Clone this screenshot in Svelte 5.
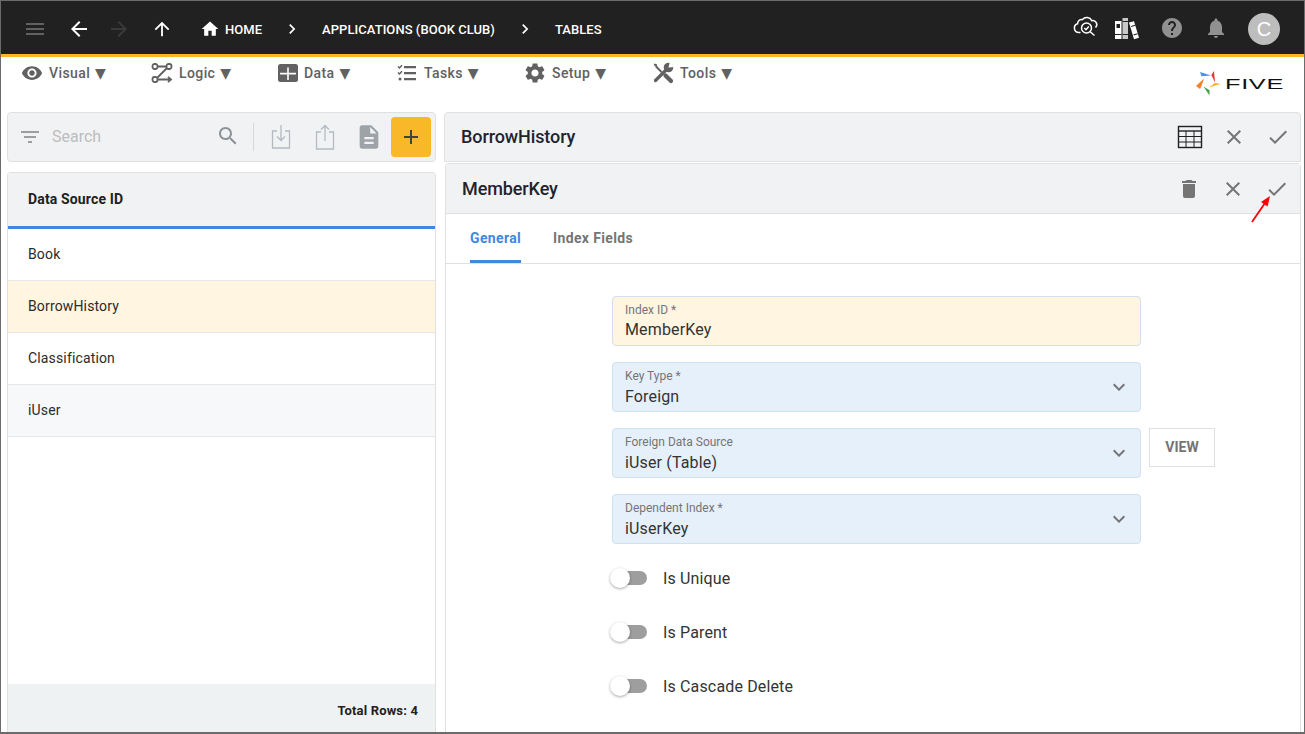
<script>
  const icons = {
    menu: 'M3 18h18v-2H3v2zm0-5h18v-2H3v2zm0-7v2h18V6H3z',
    back: 'M20 11H7.83l5.59-5.59L12 4l-8 8 8 8 1.41-1.41L7.83 13H20v-2z',
    forward: 'M12 4l-1.41 1.41L16.17 11H4v2h12.17l-5.58 5.59L12 20l8-8z',
    up: 'M4 12l1.41 1.41L11 7.83V20h2V7.83l5.58 5.59L20 12l-8-8-8 8z',
    home: 'M10 20v-6h4v6h5v-8h3L12 3 2 12h3v8z',
    chevron: 'M10 6L8.59 7.41 13.17 12l-4.58 4.59L10 18l6-6z',
    eye: 'M12 4.5C7 4.5 2.73 7.61 1 12c1.73 4.39 6 7.5 11 7.5s9.27-3.11 11-7.5c-1.73-4.39-6-7.5-11-7.5zM12 17c-2.76 0-5-2.24-5-5s2.24-5 5-5 5 2.24 5 5-2.24 5-5 5zm0-8c-1.66 0-3 1.34-3 3s1.34 3 3 3 3-1.34 3-3-1.34-3-3-3z',
    gear: 'M19.14 12.94c.04-.3.06-.61.06-.94 0-.32-.02-.64-.07-.94l2.03-1.58c.18-.14.23-.41.12-.61l-1.92-3.32c-.12-.22-.37-.29-.59-.22l-2.39.96c-.5-.38-1.03-.7-1.62-.94l-.36-2.54c-.04-.24-.24-.41-.48-.41h-3.84c-.24 0-.43.17-.47.41l-.36 2.54c-.59.24-1.13.57-1.62.94l-2.39-.96c-.22-.08-.47 0-.59.22L2.74 8.87c-.12.21-.08.47.12.61l2.03 1.58c-.05.3-.09.63-.09.94s.02.64.07.94l-2.03 1.58c-.18.14-.23.41-.12.61l1.92 3.32c.12.22.37.29.59.22l2.39-.96c.5.38 1.03.7 1.62.94l.36 2.54c.05.24.24.41.48.41h3.84c.24 0 .44-.17.47-.41l.36-2.54c.59-.24 1.13-.56 1.62-.94l2.39.96c.22.08.47 0 .59-.22l1.92-3.32c.12-.22.07-.47-.12-.61l-2.01-1.58zM12 15.6c-1.98 0-3.6-1.62-3.6-3.6s1.62-3.6 3.6-3.6 3.6 1.62 3.6 3.6-1.62 3.6-3.6 3.6z',
    help: 'M12 2C6.48 2 2 6.48 2 12s4.48 10 10 10 10-4.48 10-10S17.52 2 12 2zm1 17h-2v-2h2v2zm2.07-7.75l-.9.92C13.45 12.9 13 13.5 13 15h-2v-.5c0-1.1.45-2.1 1.17-2.83l1.24-1.26c.37-.36.59-.86.59-1.41 0-1.1-.9-2-2-2s-2 .9-2 2H8c0-2.21 1.79-4 4-4s4 1.79 4 4c0 .88-.36 1.68-.93 2.25z',
    bell: 'M12 22c1.1 0 2-.9 2-2h-4c0 1.1.89 2 2 2zm6-6v-5c0-3.07-1.64-5.64-4.5-6.32V4c0-.83-.67-1.5-1.5-1.5s-1.5.67-1.5 1.5v.68C7.63 5.36 6 7.92 6 11v5l-2 2v1h16v-1l-2-2z',
    search: 'M15.5 14h-.79l-.28-.27C15.41 12.59 16 11.11 16 9.5 16 5.91 13.09 3 9.5 3S3 5.91 3 9.5 5.91 16 9.5 16c1.61 0 3.09-.59 4.23-1.57l.27.28v.79l5 4.99L20.49 19l-4.99-5zm-6 0C7.01 14 5 11.99 5 9.5S7.01 5 9.5 5 14 7.01 14 9.5 11.99 14 9.5 14z',
    filter: 'M10 18h4v-2h-4v2zM3 6v2h18V6H3zm3 7h12v-2H6v2z',
    doc: 'M14 2H6c-1.1 0-2 .9-2 2v16c0 1.1.89 2 2 2h12c1.1 0 2-.9 2-2V8l-6-6zm2 16H8v-2h8v2zm0-4H8v-2h8v2zm-3-5V3.5L18.5 9H13z',
    close: 'M19 6.41L17.59 5 12 10.59 6.41 5 5 6.41 10.59 12 5 17.59 6.41 19 12 13.41 17.59 19 19 17.59 13.41 12z',
    check: 'M9 16.17L4.83 12l-1.42 1.41L9 19 21 7l-1.41-1.41z',
    trash: 'M6 19c0 1.1.9 2 2 2h8c1.1 0 2-.9 2-2V7H6v12zM19 4h-3.5l-1-1h-5l-1 1H5v2h14V4z',
    expand: 'M16.59 8.59L12 13.17 7.41 8.59 6 10l6 6 6-6z',
    add: 'M19 13h-6v6h-2v-6H5v-2h6V5h2v6h6v2z'
  };

  const rows = ['Book', 'BorrowHistory', 'Classification', 'iUser'];
  const selects = [
    { label: 'Key Type *', value: 'Foreign' },
    { label: 'Foreign Data Source', value: 'iUser (Table)', view: true },
    { label: 'Dependent Index *', value: 'iUserKey' }
  ];
  const toggles = ['Is Unique', 'Is Parent', 'Is Cascade Delete'];
</script>

{#snippet icon(name, size = 24, cls = '')}
  <svg class="icon {cls}" width={size} height={size} viewBox="0 0 24 24" aria-hidden="true"><path d={icons[name]} /></svg>
{/snippet}

<div class="frame">
  <header class="topbar">
    <button class="nav menu">{@render icon('menu')}</button>
    <button class="nav back">{@render icon('back')}</button>
    <button class="nav forward">{@render icon('forward')}</button>
    <button class="nav up">{@render icon('up', 22)}</button>
    <div class="crumbs">
      <span class="crumb home">{@render icon('home', 20)}HOME</span>
      <span class="sep">{@render icon('chevron', 20)}</span>
      <span class="crumb">APPLICATIONS (BOOK CLUB)</span>
      <span class="sep">{@render icon('chevron', 20)}</span>
      <span class="crumb">TABLES</span>
    </div>
    <div class="top-right">
      <svg class="cloud" width="26" height="26" viewBox="0 0 26 26" fill="none" stroke="#fff" stroke-width="1.5" aria-hidden="true">
        <path d="M7.500 19.500H5.800A4.500 4.500 0 0 1 4.600 10.700 4 4 0 0 1 9.400 6.600 5.600 5.600 0 0 1 18.800 7.700a4 4 0 0 1 3.700 6.800" />
        <circle cx="13.500" cy="15" r="5" />
        <path d="M11.300 15l1.700 1.700 2.800-3.200M17.200 18.800l4.300 3.700" />
      </svg>
      <svg class="books" width="26" height="26" viewBox="0 0 26 26" aria-hidden="true">
        <path fill="#fff" d="M1 5h6.500v18H1z" />
        <path fill="#c8c8c8" d="M8.500 2h5.500v21H8.500z" />
        <path fill="#fff" d="M15 6.500l5-1.300 5 16.600-5 1.500z" />
        <path fill="#212121" d="M2.500 8h3.500v4H2.500zM1 18h6.500v1H1zM8.500 18h5.500v1H8.500zM8.500 5h5.500v1H8.500zM17 10l4-1.200.3 1-4 1.200zM19.400 18.500l4-1.200.3 1-4 1.200z" />
      </svg>
      {@render icon('help', 24, 'muted')}
      {@render icon('bell', 24, 'muted')}
      <span class="avatar">C</span>
    </div>
  </header>

  <nav class="menubar">
    <span class="m-item visual">{@render icon('eye', 22)}<span>Visual <span class="tri">▼</span></span></span>
    <span class="m-item logic">
      <svg width="22" height="22" viewBox="0 0 22 22" fill="none" stroke="#616161" stroke-width="1.8" aria-hidden="true">
        <rect x="1.500" y="2" width="5" height="5" rx="2" />
        <rect x="15.500" y="2" width="5" height="5" rx="2" />
        <rect x="1.500" y="15" width="5" height="5" rx="2" />
        <path d="M6.500 4.500h9M15.500 6.500L6.500 15.500M6.500 17.500h13M17 14.800l3 2.700-3 2.700" />
      </svg>
      <span>Logic <span class="tri">▼</span></span>
    </span>
    <span class="m-item data">
      <svg width="22" height="22" viewBox="0 0 22 22" aria-hidden="true">
        <rect x="1" y="2" width="20" height="18" rx="2.500" fill="#616161" />
        <path fill="#fff" d="M3 10.800h16v1.600H3zM10.200 5.500h1.600V18h-1.600z" />
      </svg>
      <span>Data <span class="tri">▼</span></span>
    </span>
    <span class="m-item tasks">
      <svg width="20" height="20" viewBox="0 0 20 20" aria-hidden="true">
        <path fill="#616161" d="M7 3h12v2.200H7zM7 9h12v2.200H7zM7 15h12v2.200H7z" />
        <path fill="none" stroke="#616161" stroke-width="1.500" d="M1 3.500l1.500 1.500L5 2.200M1 9.500l1.500 1.500L5 8.200" />
        <circle cx="3" cy="16" r="1.500" fill="#616161" />
      </svg>
      <span>Tasks <span class="tri">▼</span></span>
    </span>
    <span class="m-item setup">{@render icon('gear', 24)}<span>Setup <span class="tri">▼</span></span></span>
    <span class="m-item tools">
      <svg width="24" height="24" viewBox="0 0 24 24" fill="none" stroke="#616161" aria-hidden="true">
        <path stroke-width="2" d="M3 3.500l2 .5.500 2 5 5" />
        <path stroke-width="4.200" stroke-linecap="round" d="M14.500 14.500l5.500 5.500" />
        <path stroke-width="3.200" stroke-linecap="round" d="M4.500 19.500L16 8" />
        <circle cx="17.500" cy="6.500" r="4.800" fill="#616161" stroke="none" />
        <path fill="#fff" stroke="none" d="M17.500 6.500L19 .5l5 5.500z" />
      </svg>
      <span>Tools <span class="tri">▼</span></span>
    </span>
    <div class="logo">
      <svg width="26" height="26" viewBox="0 0 26 26" aria-hidden="true">
        <path fill="#4a90e2" d="M4 1l11 3.500-9.500.8z" />
        <path fill="#e5383b" d="M18 0l1 11.500-3.700-7.500z" />
        <path fill="#f9b72a" d="M24.500 13L13 16.500l6-4.800z" />
        <path fill="#43a047" d="M13.500 24.500L7.500 15.500l6 3.700z" />
        <path fill="#f5822a" d="M0 15l8-7.500-2.500 7.500-1.500 3z" />
      </svg>
      <svg class="wordmark" width="59" height="20" viewBox="0 0 59 20" aria-label="FIVE"><text x="0" y="15" textLength="59" lengthAdjust="spacingAndGlyphs">FIVE</text></svg>
    </div>
  </nav>

  <main class="content">
    <aside class="left">
      <div class="toolbar">
        {@render icon('filter', 24, 'filter')}
        <span class="search-text">Search</span>
        {@render icon('search', 24, 'search')}
        <span class="divider"></span>
        <svg class="tool-a" width="22" height="26" viewBox="0 0 22 26" fill="none" stroke="#b4bac0" stroke-width="1.300" aria-hidden="true">
          <path d="M7 7H2.500v17h17V7H15M11 1v15M7 12.500l4 4 4-4" />
        </svg>
        <svg class="tool-b" width="22" height="26" viewBox="0 0 22 26" fill="none" stroke="#b4bac0" stroke-width="1.300" aria-hidden="true">
          <path d="M7 8H2.500v17h17V8H15M11 17V2M7 5.500l4-4 4 4" />
        </svg>
        {@render icon('doc', 28, 'tool-doc')}
        <button class="add">{@render icon('add', 24)}</button>
      </div>

      <section class="list">
        <div class="list-head">Data Source ID</div>
        <div class="list-rows">
          {#each rows as row, i}
            <div class="row" class:selected={i === 1} class:alt={i === 3}>{row}</div>
          {/each}
        </div>
        <div class="list-foot">Total Rows: 4</div>
      </section>
    </aside>

    <div class="right">
      <div class="title-bar outer">
        <span class="title">BorrowHistory</span>
        <svg class="grid-icon" width="26" height="24" viewBox="0 0 26 24" fill="none" stroke="#212121" aria-hidden="true">
          <rect x="1.500" y="1.500" width="23" height="21" stroke-width="1.400" />
          <path d="M1.500 6h23" stroke-width="1.400" />
          <path d="M1.500 11.500h23M1.500 17h23M9 6v16.500M17 6v16.500" stroke-width="1" />
        </svg>
        {@render icon('close', 24, 'action')}
        {@render icon('check', 24, 'action')}
      </div>

      <section class="card">
        <div class="title-bar inner">
          <span class="title">MemberKey</span>
          {@render icon('trash', 24, 'action')}
          {@render icon('close', 24, 'action')}
          <span class="check-wrap">
            {@render icon('check', 24, 'action')}
            <svg class="arrow" width="22" height="32" viewBox="0 0 22 32" aria-hidden="true">
              <path fill="none" stroke="#f00" stroke-width="1.800" d="M2 31L15 12" />
              <path fill="#f00" d="M20 5l-2.400 10.500-6.600-4.600z" />
            </svg>
          </span>
        </div>

        <div class="tabs">
          <span class="tab active">General</span>
          <span class="tab">Index Fields</span>
        </div>

        <div class="form">
          <div class="field key">
            <span class="f-label">Index ID *</span>
            <span class="f-value">MemberKey</span>
          </div>
          {#each selects as s}
            <div class="select-row">
              <div class="field sel">
                <span class="f-label">{s.label}</span>
                <span class="f-value">{s.value}</span>
                {@render icon('expand', 24, 'caret')}
              </div>
              {#if s.view}
                <button class="view">VIEW</button>
              {/if}
            </div>
          {/each}
          <div class="toggles">
            {#each toggles as t}
              <div class="toggle">
                <span class="track"><span class="thumb"></span></span>
                <span class="t-label">{t}</span>
              </div>
            {/each}
          </div>
        </div>
      </section>
    </div>
  </main>
</div>

<style>
  :global(body) {
    margin: 0;
    background: #fff;
  }

  .frame {
    box-sizing: border-box;
    width: 1305px;
    height: 734px;
    overflow: hidden;
    display: flex;
    flex-direction: column;
    border-top: 1px solid #6b6b6b;
    border-left: 1px solid #6b6b6b;
    border-right: 1px solid #6b6b6b;
    border-bottom: 2px solid #6b6b6b;
    font-family: Roboto, 'Liberation Sans', sans-serif;
    color: #212121;
  }

  svg {
    display: block;
    flex: none;
  }

  .icon path {
    fill: currentColor;
  }

  button {
    border: none;
    background: none;
    padding: 0;
    font-family: inherit;
  }

  /* top bar */
  .topbar {
    flex: none;
    box-sizing: border-box;
    height: 56px;
    background: #212121;
    border-bottom: 3px solid #f9b72a;
    display: flex;
    align-items: center;
    color: #fff;
    padding: 3px 0 0 22px;
  }

  .nav {
    display: flex;
    color: #fff;
  }

  .menu {
    color: #616161;
    margin-right: 20px;
  }

  .forward {
    color: #3a3a3a;
    margin-left: 16px;
  }

  .up {
    margin-left: 20px;
  }

  .crumbs {
    display: flex;
    align-items: center;
    margin-left: 27px;
    font-size: 13px;
    font-weight: 500;
    letter-spacing: 0.05px;
  }

  .crumb {
    display: flex;
    align-items: center;
    gap: 5px;
  }

  .sep {
    margin: 0 20px;
  }

  .top-right {
    margin-left: auto;
    display: flex;
    align-items: center;
    padding-right: 24px;
  }

  .cloud {
    margin: 0 15px 6px 0;
  }

  .books {
    margin-right: 20px;
  }

  .muted {
    color: #919191;
    margin: 0 20px 3px 0;
  }

  .avatar {
    width: 32px;
    height: 32px;
    border-radius: 50%;
    background: #bdbdbd;
    color: #fff;
    font-size: 20px;
    display: flex;
    align-items: center;
    justify-content: center;
    font-family: 'Liberation Sans', sans-serif;
  }

  /* menu row */
  .menubar {
    flex: none;
    height: 55px;
    position: relative;
    display: flex;
    align-items: flex-start;
    padding: 4px 0 0 20px;
    box-sizing: border-box;
    color: #616161;
    font-size: 14px;
    font-weight: 500;
    letter-spacing: 0.4px;
  }

  .m-item {
    display: flex;
    align-items: center;
    gap: 6px;
    height: 24px;
    white-space: nowrap;
  }

  .tri {
    font-family: 'DejaVu Sans', sans-serif;
    font-size: 14px;
    margin-left: 1px;
  }

  .visual { width: 130px; }
  .logic { width: 126px; }
  .data { width: 120px; gap: 5px; }
  .tasks { width: 126px; gap: 7px; }
  .setup { width: 128px; gap: 5px; }
  .tools { gap: 5px; }

  .logo {
    position: absolute;
    top: 14px;
    right: 20px;
    display: flex;
    align-items: center;
    gap: 3px;
  }

  .wordmark text {
    font-family: 'Liberation Sans', sans-serif;
    font-size: 15px;
    fill: #111;
  }

  /* body */
  .content {
    flex: 1;
    min-height: 0;
    display: flex;
    gap: 8px;
    padding-left: 6px;
    padding-right: 3px;
  }

  .left {
    width: 429px;
    flex: none;
    display: flex;
    flex-direction: column;
    gap: 10px;
  }

  .toolbar {
    flex: none;
    box-sizing: border-box;
    height: 50px;
    background: #f1f2f4;
    border: 1px solid #e0e0e0;
    border-radius: 4px;
    display: flex;
    align-items: center;
    padding-left: 10px;
  }

  .filter {
    color: #9e9e9e;
  }

  .search-text {
    margin: 0 0 2px 10px;
    width: 164px;
    font-size: 16px;
    color: #bdbdbd;
  }

  .search {
    color: #8d9296;
    margin-bottom: 2px;
  }

  .divider {
    width: 1px;
    height: 28px;
    background: #d5d7d9;
    margin: 0 16px 0 13px;
  }

  .tool-b {
    margin-left: 22px;
  }

  .tool-doc {
    color: #9ea3a8;
    margin-left: 19px;
  }

  .add {
    width: 40px;
    height: 40px;
    margin-left: 8px;
    border-radius: 4px;
    background: #f9b72a;
    color: #424242;
    display: flex;
    align-items: center;
    justify-content: center;
  }

  .list {
    flex: 1;
    min-height: 0;
    box-sizing: border-box;
    display: flex;
    flex-direction: column;
    border: 1px solid #e0e0e0;
    border-bottom: none;
    border-radius: 4px 4px 0 0;
  }

  .list-head {
    flex: none;
    box-sizing: border-box;
    height: 56px;
    background: #f1f2f4;
    border-bottom: 3px solid #3f88de;
    display: flex;
    align-items: center;
    padding: 0 0 2px 20px;
    font-size: 14px;
    font-weight: 700;
    letter-spacing: 0.15px;
  }

  .list-rows {
    flex: 1;
  }

  .row {
    box-sizing: border-box;
    height: 52px;
    border-bottom: 1px solid #e6e6e6;
    display: flex;
    align-items: center;
    padding: 0 0 2px 20px;
    font-size: 14px;
    letter-spacing: 0.15px;
    color: #2b2b2b;
  }

  .row.selected {
    background: #fff5e1;
  }

  .row.alt {
    background: #f7f8fa;
  }

  .list-foot {
    flex: none;
    height: 48px;
    background: #eff2f3;
    display: flex;
    align-items: center;
    justify-content: flex-end;
    padding-right: 17px;
    padding-top: 4px;
    box-sizing: border-box;
    font-size: 13px;
    font-weight: 700;
    letter-spacing: 0.15px;
  }

  .right {
    flex: 1;
    min-width: 0;
    display: flex;
    flex-direction: column;
    gap: 1px;
  }

  .title-bar {
    flex: none;
    box-sizing: border-box;
    background: #f1f2f4;
    display: flex;
    align-items: center;
    gap: 20px;
  }

  .title-bar .title {
    margin-right: auto;
    font-size: 18px;
    font-weight: 500;
    letter-spacing: -0.1px;
    color: #1f2430;
  }

  .outer {
    height: 50px;
    border: 1px solid #e0e0e0;
    border-radius: 4px 4px 0 0;
    padding: 0 10px 0 16px;
  }

  .outer .title {
    margin-bottom: 2px;
  }

  .grid-icon {
    margin-right: -1px;
  }

  .action {
    color: #757575;
  }

  .card {
    flex: 1;
    min-height: 0;
    margin-left: 1px;
    border: 1px solid #e0e0e0;
    border-bottom: none;
    border-radius: 4px 4px 0 0;
    display: flex;
    flex-direction: column;
  }

  .inner {
    height: 50px;
    border-bottom: 1px solid #e0e0e0;
    padding: 0 11px 0 16px;
  }

  .check-wrap {
    position: relative;
  }

  .arrow {
    position: absolute;
    top: 14px;
    left: -15px;
  }

  .tabs {
    flex: none;
    box-sizing: border-box;
    height: 50px;
    border-bottom: 1px solid #e0e0e0;
    display: flex;
    gap: 32px;
    padding-left: 24px;
  }

  .tab {
    display: flex;
    align-items: center;
    box-sizing: border-box;
    height: 49px;
    padding-bottom: 1px;
    font-size: 14px;
    font-weight: 700;
    color: #757575;
    letter-spacing: 0.35px;
  }

  .tab.active {
    color: #3f88de;
    box-shadow: inset 0 -3px 0 #3f88de;
  }

  .form {
    flex: 1;
    padding: 32px 0 0 166px;
    display: flex;
    flex-direction: column;
    gap: 16px;
  }

  .select-row {
    display: flex;
    align-items: flex-start;
    gap: 8px;
  }

  .field {
    box-sizing: border-box;
    position: relative;
    width: 529px;
    height: 50px;
    border: 1px solid #cfe0ef;
    border-radius: 4px;
    padding: 6px 12px 0;
    display: flex;
    flex-direction: column;
  }

  .field.key {
    background: #fff5e1;
  }

  .field.sel {
    background: #e5f0fb;
  }

  .f-label {
    font-size: 12px;
    line-height: 14px;
    color: #757575;
  }

  .f-value {
    margin-top: 1px;
    font-size: 16px;
    line-height: 24px;
    letter-spacing: 0.15px;
    color: #333;
  }

  .sel .f-value {
    margin-top: 2px;
  }

  .caret {
    position: absolute;
    right: 9px;
    top: 12px;
    color: #757575;
  }

  .view {
    box-sizing: border-box;
    width: 66px;
    height: 39px;
    padding-bottom: 2px;
    border: 1px solid #e0e0e0;
    background: #fff;
    color: #757575;
    font-size: 14px;
    font-weight: 700;
  }

  .toggles {
    display: flex;
    flex-direction: column;
    gap: 30px;
    margin-top: 6px;
  }

  .toggle {
    display: flex;
    align-items: center;
    height: 24px;
    gap: 16px;
  }

  .track {
    position: relative;
    width: 34px;
    height: 14px;
    margin-left: 1px;
    border-radius: 7px;
    background: #9e9e9e;
  }

  .thumb {
    position: absolute;
    left: -3px;
    top: -3px;
    width: 20px;
    height: 20px;
    border-radius: 50%;
    background: #fff;
    box-shadow: 0 1px 3px rgba(0, 0, 0, 0.35);
  }

  .t-label {
    font-size: 16px;
    letter-spacing: 0.15px;
    color: #333;
  }
</style>
